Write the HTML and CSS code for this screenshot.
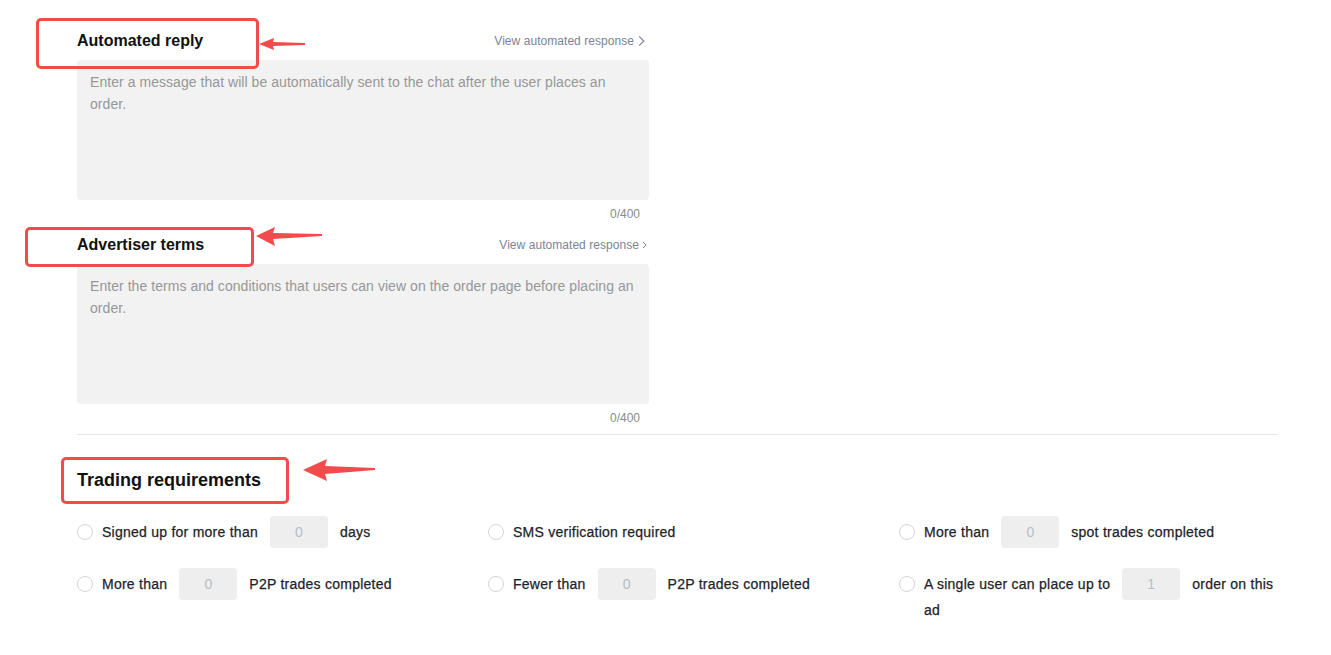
FILE: index.html
```html
<!DOCTYPE html>
<html lang="en">
<head>
<meta charset="utf-8">
<title>Ad settings</title>
<link rel="stylesheet" href="styles.css">
</head>
<body>
<div class="page">
  <section class="field first">
    <div class="field-head">
      <h3 class="field-title">Automated reply</h3>
      <a class="view-link">View automated response
        <svg class="chev big" viewBox="0 0 6 10" width="6" height="10"><path d="M1 1l4 4-4 4" fill="none" stroke="#7c8494" stroke-width="1"/></svg>
      </a>
    </div>
    <div class="textarea">Enter a message that will be automatically sent to the chat after the user places an order.</div>
    <div class="counter">0/400</div>
  </section>

  <section class="field second">
    <div class="field-head">
      <h3 class="field-title">Advertiser terms</h3>
      <a class="view-link alt">View automated response
        <svg class="chev" viewBox="0 0 5 8" width="5" height="8"><path d="M1 1l3 3-3 3" fill="none" stroke="#7c8494" stroke-width="1"/></svg>
      </a>
    </div>
    <div class="textarea">Enter the terms and conditions that users can view on the order page before placing an order.</div>
    <div class="counter">0/400</div>
  </section>

  <hr class="divider">

  <h2 class="req-title">Trading requirements</h2>

  <div class="req-grid">
    <div class="req">
      <span class="radio"></span>
      <span class="label">Signed up for more than<span class="num">0</span>days</span>
    </div>
    <div class="req">
      <span class="radio"></span>
      <span class="label">SMS verification required</span>
    </div>
    <div class="req">
      <span class="radio"></span>
      <span class="label">More than<span class="num">0</span>spot trades completed</span>
    </div>
    <div class="req">
      <span class="radio"></span>
      <span class="label">More than<span class="num">0</span>P2P trades completed</span>
    </div>
    <div class="req">
      <span class="radio"></span>
      <span class="label">Fewer than<span class="num">0</span>P2P trades completed</span>
    </div>
    <div class="req">
      <span class="radio"></span>
      <span class="label">A single user can place up to<span class="num">1</span>order on this ad</span>
    </div>
  </div>
</div>

<div class="mark box1"></div>
<div class="mark box2"></div>
<div class="mark box3"></div>

<svg class="arrow arrow1" width="50" height="16" viewBox="0 0 50 16">
  <path d="M0 8 L15 2 L14 6 L46 7 L46 9 L14 10 L15 14 Z" fill="#f24b4b"/>
</svg>
<svg class="arrow arrow2" width="70" height="24" viewBox="0 0 70 24">
  <path d="M0 12 L19 3 L17 9 L66 10 L66 12 L17 15 L19 22 Z" fill="#f24b4b"/>
</svg>
<svg class="arrow arrow3" width="76" height="26" viewBox="0 0 76 26">
  <path d="M0 13 L24 2 L22 9 L72 11 L72 13 L22 17 L24 24 Z" fill="#f24b4b"/>
</svg>
</body>
</html>
```

FILE: styles.css
```css
* { box-sizing: border-box; }
html, body { margin: 0; padding: 0; background: #fff; }
body {
  font-family: "Liberation Sans", Arial, Helvetica, sans-serif;
  color: #1e2329;
  width: 1331px;
  height: 655px;
  overflow: hidden;
  position: relative;
}
.page {
  padding: 29px 0 0 77px;
  width: 1277px;
}
.field { width: 572px; }
.second { margin-top: 10px; }
.field-head {
  display: flex;
  justify-content: space-between;
  align-items: center;
  height: 24px;
}
.field-title {
  margin: 0;
  font-size: 16px;
  font-weight: 700;
  line-height: 24px;
  color: #111;
}
.view-link {
  font-size: 12px;
  color: #7c8494;
  display: flex;
  align-items: center;
  gap: 4px;
  margin-right: 4px;
  text-decoration: none;
  letter-spacing: 0.05px;
}
.view-link.alt { margin-right: 2px; gap: 3px; }
.chev.big { width: 7px; height: 12px; }
.textarea {
  margin-top: 7px;
  height: 140px;
  background: #f2f2f2;
  border-radius: 4px;
  padding: 11px 13px;
  font-size: 14px;
  line-height: 22px;
  color: #979797;
  letter-spacing: 0.05px;
}
.counter {
  margin-top: 5px;
  text-align: right;
  font-size: 12px;
  line-height: 18px;
  color: #8a8a8a;
  padding-right: 9px;
}
.divider {
  margin: 7px 0 0 0;
  border: 0;
  border-top: 1px solid #e6e6e6;
  width: 1200px;
}
.req-title {
  margin: 32px 0 0 0;
  font-size: 18px;
  line-height: 26px;
  font-weight: 700;
  color: #111;
}
.req-grid {
  margin-top: 23px;
  width: 1200px;
  display: grid;
  grid-template-columns: repeat(3, 1fr);
  column-gap: 33px;
  row-gap: 20px;
}
.req {
  display: flex;
  align-items: flex-start;
  font-size: 14px;
  color: #1e2329;
}
.radio {
  flex: none;
  width: 16px;
  height: 16px;
  border: 1px solid #d5d5d5;
  border-radius: 50%;
  margin-top: 8px;
  margin-right: 9px;
  background: #fff;
}
.label {
  flex: 1 1 auto;
  min-width: 0;
  line-height: 26px;
  padding: 3px 0;
  font-weight: 500;
  letter-spacing: 0.25px;
  -webkit-text-stroke: 0.25px #1e2329;
}
.num {
  display: inline-block;
  vertical-align: middle;
  width: 58px;
  height: 32px;
  line-height: 32px;
  margin: -5px 12px;
  background: #eeeeee;
  border-radius: 4px;
  text-align: center;
  color: #b7bdc6;
  font-size: 14px;
  font-weight: 400;
  letter-spacing: 0;
  -webkit-text-stroke: 0;
  position: relative;
  top: -1px;
}
.mark {
  position: absolute;
  border: 3px solid #f24b4b;
  border-radius: 5px;
}
.box1 { left: 36px; top: 18px; width: 223px; height: 51px; }
.box2 { left: 25px; top: 227px; width: 229px; height: 40px; }
.box3 { left: 61px; top: 457px; width: 228px; height: 47px; }
.arrow { position: absolute; }
.arrow1 { left: 259px; top: 36px; }
.arrow2 { left: 256px; top: 224px; }
.arrow3 { left: 303px; top: 457px; }
```
